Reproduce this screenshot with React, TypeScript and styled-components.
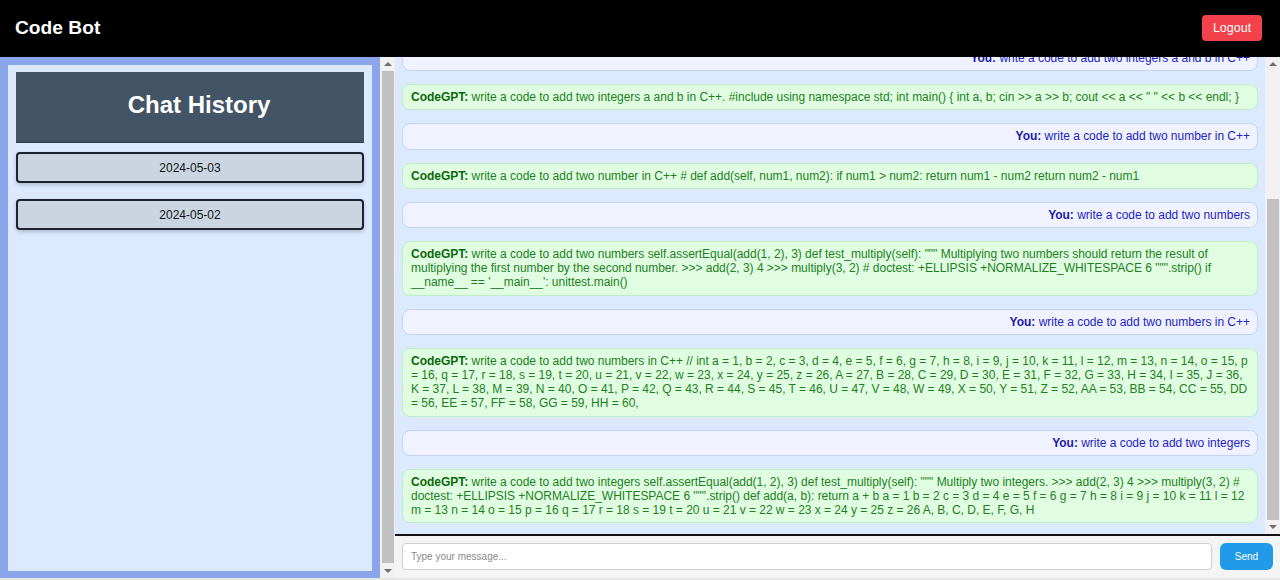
import React, { useLayoutEffect, useRef, useState } from 'react';
import styled, { createGlobalStyle } from 'styled-components';

const GlobalStyle = createGlobalStyle`
  html, body {
    margin: 0;
    padding: 0;
    height: 100%;
    overflow: hidden;
  }
  body {
    font-family: "Liberation Sans", Arial, sans-serif;
    background: #ebebeb;
  }
  #root {
    height: 100%;
  }
  * {
    box-sizing: border-box;
  }
`;

const Page = styled.div`
  height: 100vh;
  display: flex;
  flex-direction: column;
`;

const TopBar = styled.header`
  height: 57px;
  flex-shrink: 0;
  background: #000;
  display: flex;
  align-items: center;
  justify-content: space-between;
  padding: 0 18px 2px 15px;
`;

const Brand = styled.h1`
  margin: 0;
  color: #fff;
  font-size: 19.2px;
  font-weight: 700;
`;

const LogoutButton = styled.button`
  background: #f2414a;
  color: #fff;
  border: none;
  border-radius: 4px;
  width: 60px;
  height: 26px;
  font-family: inherit;
  font-size: 12.5px;
  cursor: pointer;
`;

const Main = styled.main`
  flex: 1;
  min-height: 0;
  display: flex;
  border-bottom: 2px solid #e6e6e6;
`;

/* ---------- scrollbar (drawn, since the native one is hidden) ---------- */

const Rail = styled.div`
  width: 15px;
  flex-shrink: 0;
  display: flex;
  flex-direction: column;
  background: #f1f1f1;
`;

const RailArrow = styled.div<{ $dir: 'up' | 'down' }>`
  height: 14px;
  flex-shrink: 0;
  display: flex;
  align-items: center;
  justify-content: center;

  &::after {
    content: '';
    width: 0;
    height: 0;
    border-left: 4px solid transparent;
    border-right: 4px solid transparent;
    ${(p) => (p.$dir === 'up' ? 'border-bottom: 4px solid #6e6e6e;' : 'border-top: 4px solid #6e6e6e;')}
  }
`;

const RailTrack = styled.div`
  flex: 1;
  position: relative;
`;

const RailThumb = styled.div`
  position: absolute;
  left: 2px;
  right: 1px;
  background: #c1c1c1;
`;

type Metrics = { size: number; offset: number };

const ScrollRail: React.FC<{ metrics: Metrics }> = ({ metrics }) => (
  <Rail>
    <RailArrow $dir="up" />
    <RailTrack>
      <RailThumb
        style={{
          height: `${metrics.size * 100}%`,
          top: `${metrics.offset * (1 - metrics.size) * 100}%`,
        }}
      />
    </RailTrack>
    <RailArrow $dir="down" />
  </Rail>
);

const hiddenScroll = `
  overflow-y: scroll;
  scrollbar-width: none;
  &::-webkit-scrollbar {
    display: none;
  }
`;

/* ---------- sidebar ---------- */

const SidebarColumn = styled.aside`
  width: 395px;
  flex-shrink: 0;
  display: flex;
`;

const SidebarScroller = styled.div`
  width: 380px;
  ${hiddenScroll}
`;

const SidebarBox = styled.div`
  height: calc(100% + 1px);
  border: 8px solid #8ba5eb;
  background: #dbeafe;
  padding: 7px 8px 8px;
`;

const HistoryTitle = styled.h2`
  margin: 0 0 9px;
  background: #435466;
  color: #fff;
  font-size: 24px;
  font-weight: 700;
  text-align: center;
  padding: 19px 0 23px 18px;
  border-bottom: 1px solid #2f3c4a;
`;

const DateButton = styled.button`
  display: block;
  width: 100%;
  height: 31px;
  margin: 0 0 16px;
  background: #cbd5e1;
  border: 2px solid #1c2230;
  border-radius: 4px;
  box-shadow: 0 2px 4px rgba(0, 0, 0, 0.2);
  font-family: inherit;
  font-size: 12px;
  color: #111;
  cursor: pointer;
`;

/* ---------- chat ---------- */

const ChatColumn = styled.section`
  flex: 1;
  min-width: 0;
  display: flex;
  flex-direction: column;
`;

const ChatBody = styled.div`
  flex: 1;
  min-height: 0;
  display: flex;
  background: #dbeafe;
`;

const MessageList = styled.div`
  flex: 1;
  min-width: 0;
  padding: 7px 7px 11px;
  display: flex;
  flex-direction: column;
  gap: 13px;
  ${hiddenScroll}
`;

const Bubble = styled.div<{ $from: 'user' | 'bot' }>`
  flex-shrink: 0;
  padding: 5px 7px 5px 8px;
  border-radius: 8px;
  font-size: 12px;
  line-height: 14.2px;
  letter-spacing: -0.02px;
  text-align: ${(p) => (p.$from === 'user' ? 'right' : 'left')};
  background: ${(p) => (p.$from === 'user' ? '#f0f3ff' : '#e0fde2')};
  border: 1px solid ${(p) => (p.$from === 'user' ? '#c8d3f2' : '#bfeec6')};
  color: ${(p) => (p.$from === 'user' ? '#2424c4' : '#1f7f1f')};
  word-wrap: break-word;
`;

const Speaker = styled.strong<{ $from: 'user' | 'bot' }>`
  color: ${(p) => (p.$from === 'user' ? '#1b1ba8' : '#0c680c')};
`;

const InputBar = styled.form`
  flex-shrink: 0;
  border-top: 2px solid #111;
  background: #f4f4f4;
  padding: 7px;
  display: flex;
  gap: 8px;
  height: 44px;
`;

const MessageInput = styled.input`
  flex: 1;
  height: 27px;
  border: 1px solid #cfcfcf;
  border-radius: 4px;
  background: #fff;
  padding: 0 8px;
  font-family: inherit;
  font-size: 10px;
  outline: none;

  &::placeholder {
    color: #8a8a8a;
  }
`;

const SendButton = styled.button`
  width: 53px;
  height: 27px;
  border: none;
  border-radius: 6px;
  background: #219be9;
  color: #fff;
  font-family: inherit;
  font-size: 10px;
  cursor: pointer;
`;

type Message = { from: 'user' | 'bot'; text: string };

const messages: Message[] = [
  { from: 'user', text: 'hello' },
  { from: 'bot', text: 'hello! How can I help you with your code today?' },
  { from: 'user', text: 'write a code to add two integers' },
  {
    from: 'bot',
    text: 'write a code to add two integers def add(a, b): return a + b print(add(2, 3)) # Output: 5 def main(): a = int(input()) b = int(input()) print(a + b) if __name__ == "__main__": main()',
  },
  { from: 'user', text: 'write a code to add two integers a and b in C++' },
  {
    from: 'bot',
    text: 'write a code to add two integers a and b in C++. #include using namespace std; int main() { int a, b; cin >> a >> b; cout << a << " " << b << endl; }',
  },
  { from: 'user', text: 'write a code to add two number in C++' },
  {
    from: 'bot',
    text: 'write a code to add two number in C++ # def add(self, num1, num2): if num1 > num2: return num1 - num2 return num2 - num1',
  },
  { from: 'user', text: 'write a code to add two numbers' },
  {
    from: 'bot',
    text: 'write a code to add two numbers self.assertEqual(add(1, 2), 3) def test_multiply(self): """ Multiplying two numbers should return the result of multiplying the first number by the second number. >>> add(2, 3) 4 >>> multiply(3, 2) # doctest: +ELLIPSIS +NORMALIZE_WHITESPACE 6 """.strip() if __name__ == \'__main__\': unittest.main()',
  },
  { from: 'user', text: 'write a code to add two numbers in C++' },
  {
    from: 'bot',
    text: 'write a code to add two numbers in C++ // int a = 1, b = 2, c = 3, d = 4, e = 5, f = 6, g = 7, h = 8, i = 9, j = 10, k = 11, l = 12, m = 13, n = 14, o = 15, p = 16, q = 17, r = 18, s = 19, t = 20, u = 21, v = 22, w = 23, x = 24, y = 25, z = 26, A = 27, B = 28, C = 29, D = 30, E = 31, F = 32, G = 33, H = 34, I = 35, J = 36, K = 37, L = 38, M = 39, N = 40, O = 41, P = 42, Q = 43, R = 44, S = 45, T = 46, U = 47, V = 48, W = 49, X = 50, Y = 51, Z = 52, AA = 53, BB = 54, CC = 55, DD = 56, EE = 57, FF = 58, GG = 59, HH = 60,',
  },
  { from: 'user', text: 'write a code to add two integers' },
  {
    from: 'bot',
    text: 'write a code to add two integers self.assertEqual(add(1, 2), 3) def test_multiply(self): """ Multiply two integers. >>> add(2, 3) 4 >>> multiply(3, 2) # doctest: +ELLIPSIS +NORMALIZE_WHITESPACE 6 """.strip() def add(a, b): return a + b a = 1 b = 2 c = 3 d = 4 e = 5 f = 6 g = 7 h = 8 i = 9 j = 10 k = 11 l = 12 m = 13 n = 14 o = 15 p = 16 q = 17 r = 18 s = 19 t = 20 u = 21 v = 22 w = 23 x = 24 y = 25 z = 26 A, B, C, D, E, F, G, H',
  },
];

const historyDates = ['2024-05-03', '2024-05-02'];

const readMetrics = (el: HTMLElement): Metrics => {
  const size = Math.min(1, el.clientHeight / el.scrollHeight);
  const range = el.scrollHeight - el.clientHeight;
  return { size, offset: range > 0 ? el.scrollTop / range : 0 };
};

const App: React.FC = () => {
  const listRef = useRef<HTMLDivElement>(null);
  const sideRef = useRef<HTMLDivElement>(null);
  const [chatBar, setChatBar] = useState<Metrics>({ size: 1, offset: 0 });
  const [sideBar, setSideBar] = useState<Metrics>({ size: 1, offset: 0 });

  useLayoutEffect(() => {
    const list = listRef.current;
    if (list) {
      list.scrollTop = list.scrollHeight;
      setChatBar(readMetrics(list));
    }
    if (sideRef.current) setSideBar(readMetrics(sideRef.current));
  }, []);

  return (
    <>
      <GlobalStyle />
      <Page>
        <TopBar>
          <Brand>Code Bot</Brand>
          <LogoutButton type="button">Logout</LogoutButton>
        </TopBar>

        <Main>
          <SidebarColumn>
            <SidebarScroller ref={sideRef} onScroll={(e) => setSideBar(readMetrics(e.currentTarget))}>
              <SidebarBox>
                <HistoryTitle>Chat History</HistoryTitle>
                {historyDates.map((d) => (
                  <DateButton key={d} type="button">
                    {d}
                  </DateButton>
                ))}
              </SidebarBox>
            </SidebarScroller>
            <ScrollRail metrics={sideBar} />
          </SidebarColumn>

          <ChatColumn>
            <ChatBody>
              <MessageList ref={listRef} onScroll={(e) => setChatBar(readMetrics(e.currentTarget))}>
                {messages.map((m, i) => (
                  <Bubble key={i} $from={m.from}>
                    <Speaker $from={m.from}>{m.from === 'user' ? 'You:' : 'CodeGPT:'}</Speaker> {m.text}
                  </Bubble>
                ))}
              </MessageList>
              <ScrollRail metrics={chatBar} />
            </ChatBody>
            <InputBar onSubmit={(e) => e.preventDefault()}>
              <MessageInput type="text" placeholder="Type your message..." />
              <SendButton type="submit">Send</SendButton>
            </InputBar>
          </ChatColumn>
        </Main>
      </Page>
    </>
  );
};

export default App;
